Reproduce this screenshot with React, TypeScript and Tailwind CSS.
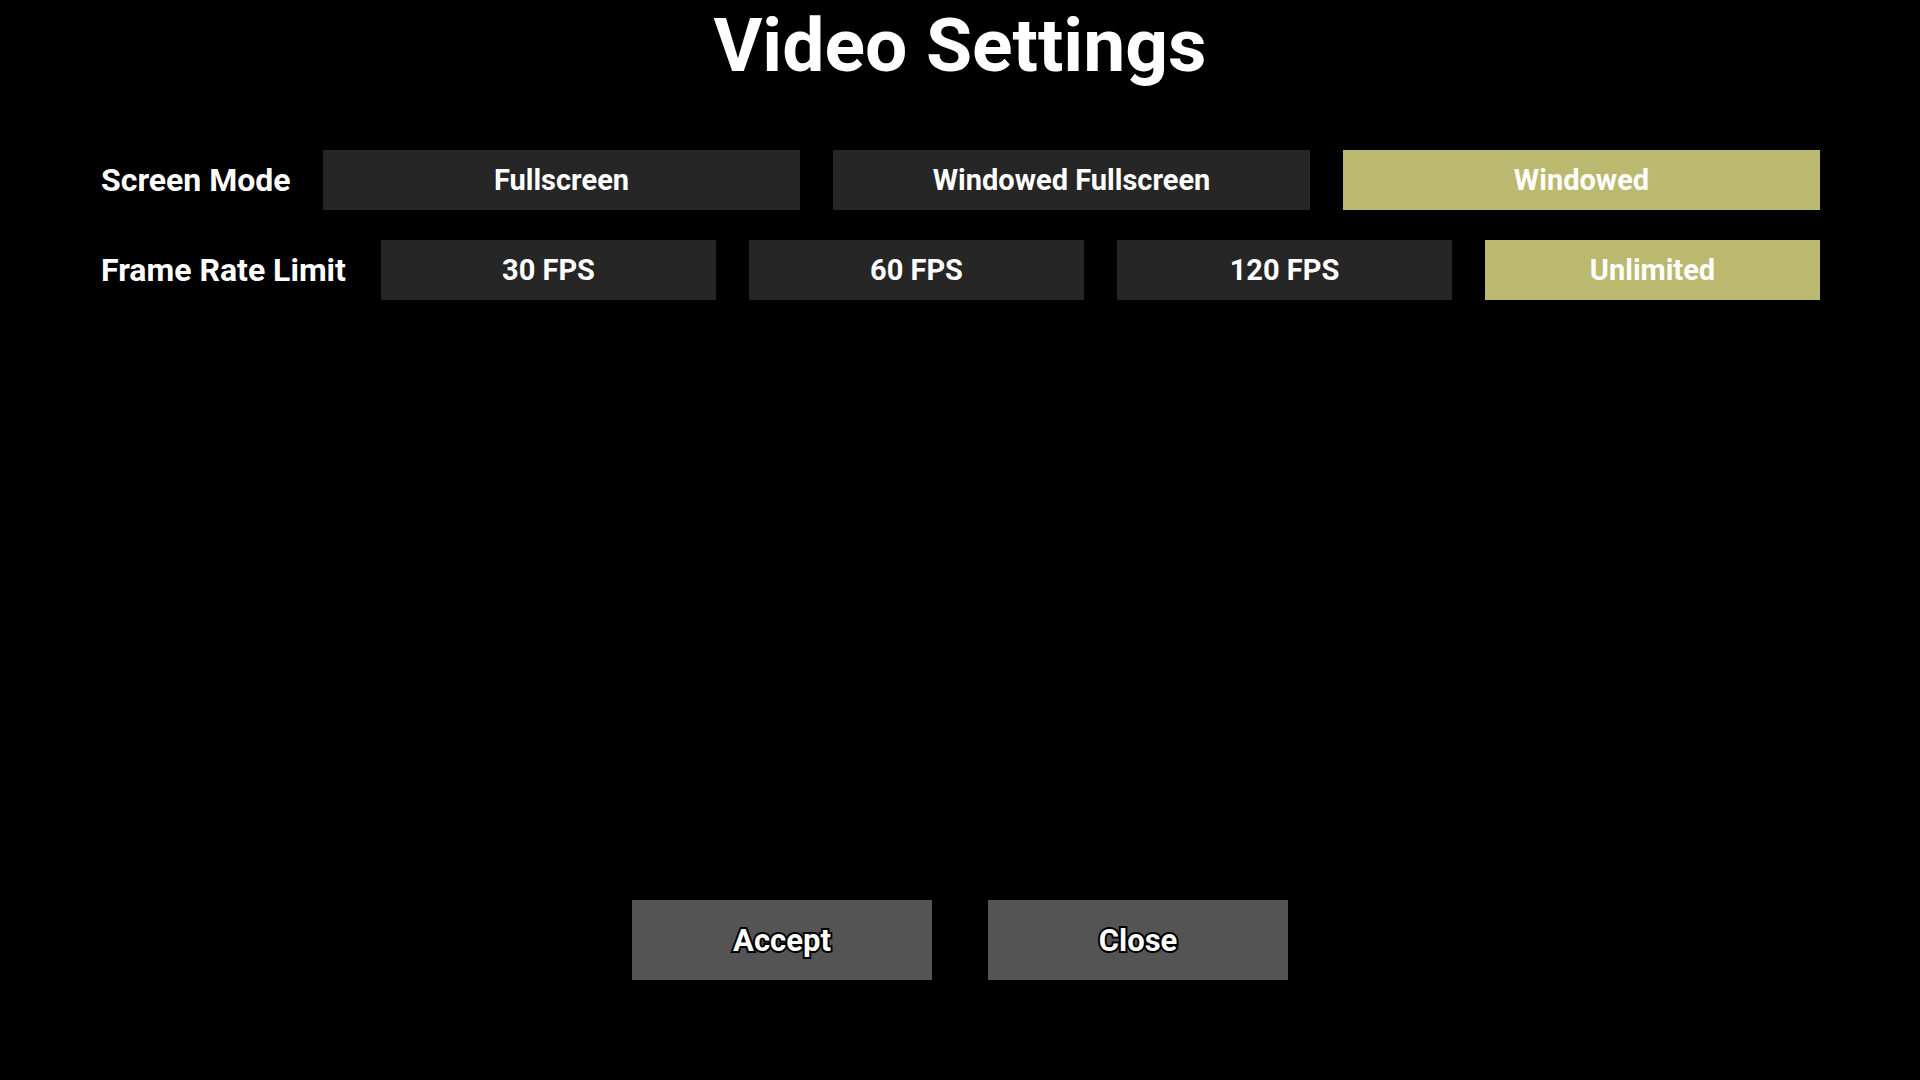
export default function App() {
  const screenModes = ["Fullscreen", "Windowed Fullscreen", "Windowed"]
  const frameRates = ["30 FPS", "60 FPS", "120 FPS", "Unlimited"]
  const selectedMode = "Windowed"
  const selectedRate = "Unlimited"

  const optionClass = (active: boolean) =>
    active
      ? "flex-1 h-[60px] pt-[2px] flex items-center justify-center bg-[#bbb86f] text-white text-[29px] font-bold"
      : "flex-1 h-[60px] pt-[2px] flex items-center justify-center bg-[#262626] text-white text-[29px] font-bold"

  return (
    <div className="w-full h-[1080px] bg-black flex flex-col font-['Roboto',sans-serif] text-white">
      {/* Title */}
      <h1 className="pt-[8px] text-center text-[75px] leading-[75px] font-bold">Video Settings</h1>

      {/* Options */}
      <div className="mt-[67px] pl-[101px] pr-[100px] flex flex-col gap-[30px]">
        <div className="flex items-center">
          <span className="w-[222px] shrink-0 text-[32px] font-bold whitespace-nowrap">Screen Mode</span>
          <div className="flex-1 flex gap-[33px]">
            {screenModes.map((m) => (
              <div key={m} className={optionClass(m === selectedMode)}>
                {m}
              </div>
            ))}
          </div>
        </div>
        <div className="flex items-center">
          <span className="w-[280px] shrink-0 text-[32px] font-bold whitespace-nowrap">Frame Rate Limit</span>
          <div className="flex-1 flex gap-[33px]">
            {frameRates.map((r) => (
              <div key={r} className={optionClass(r === selectedRate)}>
                {r}
              </div>
            ))}
          </div>
        </div>
      </div>

      {/* Footer */}
      <div className="mt-auto pb-[100px] flex justify-center gap-[56px]">
        {["Accept", "Close"].map((b) => (
          <button
            key={b}
            className="w-[300px] h-[80px] pt-[2px] bg-[#545454] flex items-center justify-center text-[31px] font-bold text-white [-webkit-text-stroke:4px_black] [paint-order:stroke_fill]"
          >
            {b}
          </button>
        ))}
      </div>
    </div>
  )
}
